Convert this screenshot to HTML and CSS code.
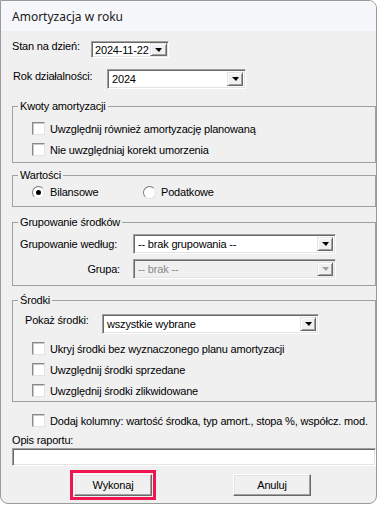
FILE: index.html
```html
<!DOCTYPE html>
<html lang="pl">
<head>
    <meta charset="UTF-8">
    <title>Amortyzacja w roku</title>
    <link rel="stylesheet" href="styles.css">
</head>
<body>
    <div class="window">
        <div class="titlebar">Amortyzacja w roku</div>

        <div class="content">
            <div class="row row-date">
                <span class="label label-date">Stan na dzień:</span>
                <div class="combo combo-date">
                    <span class="combo-text">2024-11-22</span>
                    <span class="combo-btn"><i class="arrow"></i></span>
                </div>
            </div>

            <div class="row row-year">
                <span class="label label-year">Rok działalności:</span>
                <div class="combo combo-year">
                    <span class="combo-text">2024</span>
                    <span class="combo-btn"><i class="arrow"></i></span>
                </div>
            </div>

            <!-- Kwoty amortyzacji -->
            <fieldset class="group group-kwoty">
                <legend>Kwoty amortyzacji</legend>
                <div class="check-row"><span class="checkbox"></span><span class="check-text">Uwzględnij również amortyzację planowaną</span></div>
                <div class="check-row"><span class="checkbox"></span><span class="check-text">Nie uwzględniaj korekt umorzenia</span></div>
            </fieldset>

            <!-- Wartości -->
            <fieldset class="group group-wartosci">
                <legend>Wartości</legend>
                <div class="radio-row">
                    <div class="radio-item"><span class="radio checked"></span><span class="check-text">Bilansowe</span></div>
                    <div class="radio-item"><span class="radio"></span><span class="check-text">Podatkowe</span></div>
                </div>
            </fieldset>

            <!-- Grupowanie -->
            <fieldset class="group group-grupowanie">
                <legend>Grupowanie środków</legend>
                <div class="row field-row">
                    <span class="label label-group">Grupowanie według:</span>
                    <div class="combo combo-group">
                        <span class="combo-text">-- brak grupowania --</span>
                        <span class="combo-btn"><i class="arrow"></i></span>
                    </div>
                </div>
                <div class="row field-row field-row-second">
                    <span class="label label-group label-right">Grupa:</span>
                    <div class="combo combo-group disabled">
                        <span class="combo-text">-- brak --</span>
                        <span class="combo-btn"><i class="arrow"></i></span>
                    </div>
                </div>
            </fieldset>

            <!-- Środki -->
            <fieldset class="group group-srodki">
                <legend>Środki</legend>
                <div class="row row-show">
                    <span class="label label-show">Pokaż środki:</span>
                    <div class="combo combo-show">
                        <span class="combo-text">wszystkie wybrane</span>
                        <span class="combo-btn"><i class="arrow"></i></span>
                    </div>
                </div>
                <div class="check-list">
                    <div class="check-row"><span class="checkbox"></span><span class="check-text">Ukryj środki bez wyznaczonego planu amortyzacji</span></div>
                    <div class="check-row"><span class="checkbox"></span><span class="check-text">Uwzględnij środki sprzedane</span></div>
                    <div class="check-row"><span class="checkbox"></span><span class="check-text">Uwzględnij środki zlikwidowane</span></div>
                </div>
            </fieldset>

            <div class="check-row check-columns"><span class="checkbox"></span><span class="check-text">Dodaj kolumny: wartość środka, typ amort., stopa %, współcz. mod.</span></div>

            <div class="label label-desc">Opis raportu:</div>
            <div class="textbox"></div>

            <div class="buttons">
                <button class="btn btn-default">Wykonaj</button>
                <button class="btn">Anuluj</button>
            </div>
        </div>
    </div>
</body>
</html>
```

FILE: styles.css
```css
body {
    margin: 0;
    background-color: #ffffff;
    font-family: "Liberation Sans", Arial, sans-serif;
    font-size: 11px;
    letter-spacing: -0.18px;
    color: #000;
}

.window {
    width: 377px;
    height: 504px;
    box-sizing: border-box;
    border: 1px solid #9a9a9a;
    border-radius: 0 8px 8px 8px;
    background-color: #f0f0f0;
    overflow: hidden;
}

.titlebar {
    height: 30px;
    padding-left: 11px;
    display: flex;
    align-items: center;
    background-color: #f6f7fb;
    font-family: "Noto Sans", sans-serif;
    font-size: 12px;
    letter-spacing: 0;
    color: #1a1a1a;
}

.content {
    padding-left: 11px;
}

.row {
    display: flex;
}

.label {
    line-height: 13px;
    white-space: nowrap;
}

/* combo boxes */
.combo {
    display: flex;
    align-items: stretch;
    box-sizing: border-box;
    background-color: #fff;
    border: 1px solid;
    border-color: #a0a0a0 #ffffff #ffffff #a0a0a0;
    box-shadow: inset 1px 1px #696969, inset -1px -1px #e3e3e3;
}

.combo-text {
    flex: 1;
    padding: 0 0 0 4px;
    display: flex;
    align-items: center;
    white-space: nowrap;
    overflow: hidden;
}

.combo-btn {
    width: 16px;
    margin: 2px 2px 2px 0;
    box-sizing: border-box;
    display: flex;
    align-items: center;
    justify-content: center;
    background-color: #f0f0f0;
    border: 1px solid;
    border-color: #e3e3e3 #696969 #696969 #e3e3e3;
    box-shadow: inset 1px 1px #ffffff, inset -1px -1px #a0a0a0;
}

.arrow {
    width: 0;
    height: 0;
    border-left: 4px solid transparent;
    border-right: 3px solid transparent;
    border-top: 4px solid #000;
}

.combo.disabled {
    background-color: #f0f0f0;
}

.combo.disabled .combo-text {
    color: #8a8a8a;
}

.combo.disabled .arrow {
    border-top-color: #a0a0a0;
}

.row-date {
    margin-top: 10px;
    height: 17px;
}

.label-date {
    width: 79px;
    margin-top: -1px;
}

.combo-date {
    width: 78px;
}

.combo-date .combo-text {
    padding-left: 3px;
}

.combo-date .combo-btn {
    width: 17px;
    margin: 1px 1px 1px 0;
}

.row-year {
    margin-top: 11px;
    height: 20px;
}

.label-year {
    width: 94px;
    padding-left: 1px;
    margin-top: 1px;
}

.combo-year {
    width: 139px;
}

/* group boxes */
.group {
    margin: 0;
    padding: 0;
    min-width: 0;
    border: 1px solid #a0a0a0;
}

.group legend {
    margin-left: 5px;
    padding: 0 2px;
    line-height: 13px;
}

.group-kwoty {
    margin-top: 11px;
    padding: 5px 0 2px;
}

.check-row {
    height: 21px;
    padding-left: 19px;
    display: flex;
    align-items: center;
}

.checkbox {
    width: 13px;
    height: 13px;
    box-sizing: border-box;
    background-color: #fff;
    border: 1px solid;
    border-color: #8a8a8a #e3e3e3 #e3e3e3 #8a8a8a;
    box-shadow: inset 1px 1px #c8c8c8;
}

.check-text {
    margin-left: 5px;
    white-space: nowrap;
}

.group-wartosci {
    margin-top: 6px;
    padding: 0 0 4px;
}

.radio-row {
    height: 20px;
    padding-left: 19px;
    display: flex;
    align-items: center;
}

.radio-item {
    width: 111px;
    display: flex;
    align-items: center;
}

.radio {
    position: relative;
    width: 13px;
    height: 13px;
    box-sizing: border-box;
    border-radius: 50%;
    background-color: #fff;
    border: 1px solid;
    border-color: #7a7a7a #e3e3e3 #e3e3e3 #7a7a7a;
}

.radio.checked::after {
    content: "";
    position: absolute;
    left: 3px;
    top: 3px;
    width: 5px;
    height: 5px;
    border-radius: 50%;
    background-color: #000;
}

.group-grupowanie {
    margin-top: 9px;
    padding: 5px 0 6px;
}

.field-row {
    height: 20px;
    padding-left: 7px;
    align-items: center;
}

.field-row-second {
    margin-top: 5px;
}

.label-group {
    width: 100px;
}

.label-right {
    text-align: right;
}

.combo-group {
    width: 203px;
    height: 20px;
    margin-left: 13px;
}

.group-srodki {
    margin-top: 8px;
    padding: 7px 0 0;
}

.row-show {
    height: 20px;
    padding-left: 12px;
}

.label-show {
    width: 77px;
}

.combo-show {
    width: 217px;
}

.check-list {
    margin-top: 4px;
}

.check-columns {
    margin-top: 8px;
    padding-left: 20px;
}

.label-desc {
    margin-top: 3px;
}

.textbox {
    width: 364px;
    height: 18px;
    margin-top: 1px;
    box-sizing: border-box;
    background-color: #fff;
    border: 1px solid;
    border-color: #a0a0a0 #ffffff #ffffff #a0a0a0;
    box-shadow: inset 1px 1px #696969, inset -1px -1px #e3e3e3;
}

.buttons {
    margin-top: 8px;
    padding-left: 62px;
    display: flex;
    gap: 81px;
}

.btn {
    width: 78px;
    height: 22px;
    padding: 0;
    box-sizing: border-box;
    font-family: "Liberation Sans", Arial, sans-serif;
    font-size: 11px;
    letter-spacing: -0.18px;
    color: #000;
    background-color: #f0f0f0;
    border: 1px solid;
    border-color: #ffffff #696969 #696969 #ffffff;
    box-shadow: inset -1px -1px #a0a0a0, inset 1px 1px #e3e3e3;
}

.btn-default {
    outline: 3px solid #f0144f;
    outline-offset: 1px;
}
```
